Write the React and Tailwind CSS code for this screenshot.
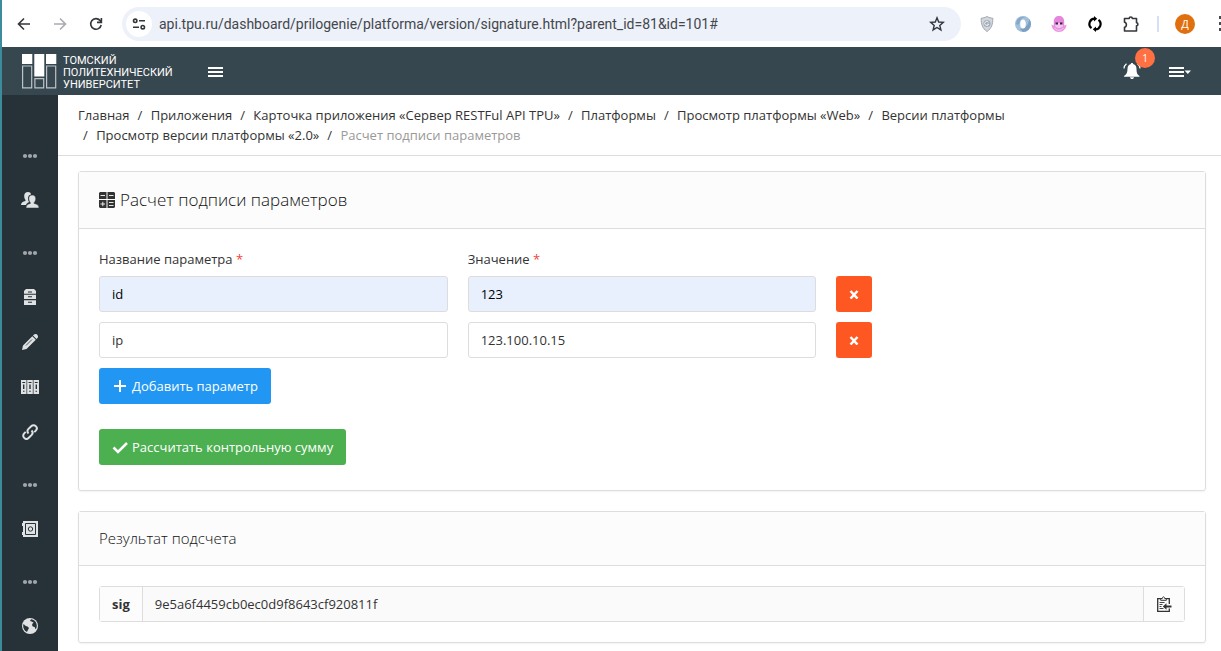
import React, { useState } from 'react';

const breadcrumbs = [
    'Главная',
    'Приложения',
    'Карточка приложения «Сервер RESTFul API TPU»',
    'Платформы',
    'Просмотр платформы «Web»',
    'Версии платформы',
    'Просмотр версии платформы «2.0»',
];

/* ---------- Browser icons ---------- */

const BackIcon = () => (
    <svg width="16" height="16" viewBox="0 0 16 16" fill="none" stroke="currentColor" strokeWidth="1.6">
        <path d="M14 8H3M8 2.5 2.5 8 8 13.5" />
    </svg>
);

const ForwardIcon = () => (
    <svg width="16" height="16" viewBox="0 0 16 16" fill="none" stroke="currentColor" strokeWidth="1.6">
        <path d="M2 8h11M8 2.5 13.5 8 8 13.5" />
    </svg>
);

const ReloadIcon = () => (
    <svg width="16" height="16" viewBox="0 0 16 16" fill="none" stroke="currentColor" strokeWidth="1.6">
        <path d="M13.2 9A5.3 5.3 0 1 1 12 4.4L13.4 6" />
        <path d="M13.4 2v4.4H9" />
    </svg>
);

const SiteInfoIcon = () => (
    <svg width="14" height="14" viewBox="0 0 14 14" fill="none" stroke="#33363a" strokeWidth="1.6">
        <circle cx="3.2" cy="3.8" r="1.7" />
        <path d="M7 3.8h6M1 10.2h6" />
        <circle cx="10.8" cy="10.2" r="1.7" />
    </svg>
);

const StarIcon = () => (
    <svg width="16" height="16" viewBox="0 0 16 16" fill="none" stroke="#33363a" strokeWidth="1.4">
        <path d="m8 1.8 1.7 4.2 4.6.4-3.5 3 1.1 4.5L8 11.5l-3.9 2.4 1.1-4.5-3.5-3L6.3 6Z" />
    </svg>
);

const ShieldIcon = () => (
    <svg width="16" height="18" viewBox="0 0 16 18" fill="none">
        <path d="M8 1.5c2 1.2 4 1.6 5.8 1.7C14 9 12.5 13.5 8 16.5 3.5 13.5 2 9 2.2 3.2 4 3.1 6 2.7 8 1.5Z" fill="#d3d7dc" stroke="#a0a7af" />
        <circle cx="8" cy="8.5" r="3.6" fill="#a3adba" />
        <path d="M9.6 7.2A2.1 2.1 0 1 0 9.8 9.2H8" stroke="#eef1f4" />
    </svg>
);

const RingIcon = () => (
    <svg width="18" height="18" viewBox="0 0 18 18" fill="none">
        <circle cx="9" cy="9" r="8" fill="#a3bfda" />
        <path d="M9 17a8 8 0 0 0 8-8c0-2-1-4-2-5 0 4-2 9-9 10Z" fill="#7ba0c4" />
        <path d="M3 5c2-3 6-4 9-3-4 0-6 3-6.5 6-.5 2-2 2-3.5 1Z" fill="#83a8cb" />
        <ellipse cx="9" cy="9" rx="2.8" ry="4.5" fill="#fff" />
    </svg>
);

const PinkIcon = () => (
    <svg width="16" height="18" viewBox="0 0 16 18" fill="none">
        <path d="M2.8 6.5C2.8 3 5 1 8 1s5.2 2 5.2 5.5V11H2.8Z" fill="#e585dc" />
        <path d="M.5 9.500c1 .8 2 1 3 1h9c1 0 2-.2 3-1 0 4-3.500 7.500-7.500 7.500S.5 13.500.5 9.500Z" fill="#e795e2" />
        <path d="M4 8h8v2c0 2-2 3-4 3s-4-1-4-3Z" fill="#f3c5ec" />
        <path d="M4.5 7.5h2.500v2H4.500ZM9 7.500h2.500v2H9Z" fill="#3a1f4d" />
        <path d="M3.5 13c2 3 7 3 9 0" stroke="#f7c9f3" />
    </svg>
);

const SyncIcon = () => (
    <svg width="16" height="16" viewBox="0 0 16 16" fill="none" stroke="#000" strokeWidth="2.2">
        <path d="M4.5 12.2A5.3 5.3 0 0 1 8 2.7M11.5 3.8A5.3 5.3 0 0 1 8 13.3" />
        <path d="M7 0v5.4L10.2 2.7ZM9 10.6V16l-3.2-2.7Z" fill="#000" stroke="none" />
    </svg>
);

const PuzzleIcon = () => (
    <svg width="18" height="18" viewBox="0 0 18 18" fill="none" stroke="#33363a" strokeWidth="1.6" strokeLinejoin="round">
        <path d="M2.5 3.5h4.7c0-2 3.1-2 3.1 0h4.2v4.3c1.9 0 1.9 3 0 3V16h-12v-3.8c2.5-.3 2.5-4.6 0-4.9Z" />
    </svg>
);

/* ---------- Navbar icons ---------- */

const TpuLogo = () => (
    <svg width="35" height="35" viewBox="0 0 35 35" fill="none">
        <path d="M0 0h10.3v10H0ZM12.3 0h10v22.5h-10ZM24 0h10.3v10H24Z" fill="#fff" />
        <path d="M.6 12h9.1v21.8H.6ZM12.9 24.6h8.8v9.2h-8.8ZM24.6 12h9.1v21.8h-9.1Z" stroke="#bcc4c8" strokeWidth="1.2" />
    </svg>
);

const BurgerIcon = ({ caret }) => (
    <svg width={caret ? 22 : 15} height="12" viewBox={caret ? '0 0 22 12' : '0 0 15 12'} fill="#fff">
        <path d="M0 2h15v2H0ZM0 6h15v2H0ZM0 10h15v2H0Z" />
        {caret && <path d="M15.5 5.5H22L18.8 9Z" />}
    </svg>
);

const BellIcon = () => (
    <svg width="18" height="16" viewBox="0 0 18 16" fill="none">
        <path d="M9 0c.8 0 1.2.5 1.2 1.1C12.5 1.7 13.5 3.5 13.5 6c0 3.5.5 5.5 3 7v.8H1V13c2.5-1.5 3.5-3.5 3.5-7 0-2.5 1-4.3 3.3-4.9C7.8.5 8.2 0 9 0ZM7 14.2h4c0 2.4-4 2.4-4 0Z" fill="#fff" />
        <path d="M3.5.8C2 2 1 3.8 1 5.5M14.5.8C16 2 17 3.8 17 5.5" stroke="#fff" strokeWidth="1.2" />
    </svg>
);

/* ---------- Sidebar icons ---------- */

const DotsIcon = () => (
    <svg width="16" height="6" viewBox="0 0 16 6" fill="#a0a6a9">
        <circle cx="3" cy="3" r="2.1" />
        <circle cx="8" cy="3" r="2.1" />
        <circle cx="13" cy="3" r="2.1" />
    </svg>
);

const UsersIcon = () => (
    <svg width="18" height="16" viewBox="0 0 18 16" fill="currentColor">
        <path d="M7 0c2 0 3 1.2 3 2.6C8 3 7 4.5 7 6.5c0 1.5.5 2.8 1.2 3.6C6 11 5.3 12 5 13H0c0-2.5 2-3.5 4.5-4V8C3.5 7 3.2 5.5 3.2 3.8 3.2 1.5 4.7 0 7 0Z" />
        <path d="M11.2 3c2.3 0 3.5 1.4 3.5 3.6 0 1.6-.6 3-1.5 3.9v1c2.5.4 4.8 1.5 4.8 4.5H5c0-3 2-4.1 4.3-4.5v-1c-.9-.9-1.5-2.3-1.5-3.9C7.8 4.4 9 3 11.2 3Z" stroke="#263238" strokeWidth=".5" />
    </svg>
);

const ArchiveIcon = () => (
    <svg width="14" height="16" viewBox="0 0 14 16" fill="currentColor">
        <path d="M3 0h8l2 2v2.8H1V2ZM1 5.8h12v4.3H1ZM1 11.2h12V16H1Z" />
        <path d="M5 2.5h4v1H5ZM5 7.2h4v1H5ZM5 12.8h4v1H5Z" fill="#263238" />
    </svg>
);

const PencilIcon = () => (
    <svg width="16" height="16" viewBox="0 0 16 16" fill="currentColor">
        <path d="M13.5 0A2.5 2.5 0 0 1 15.5 4l-1 1L11 1.5l1-1c.4-.3.9-.5 1.5-.5ZM1 11.5 0 16l4.5-1L13.8 5.7 10.3 2.2Z" />
        <path d="m4 11.5 6-6" stroke="#263238" strokeWidth=".8" />
    </svg>
);

const DrawersIcon = () => (
    <svg width="18" height="14" viewBox="0 0 18 14" fill="none">
        <path d="M0 0h5.5v14H0ZM6.2 0h5.6v14H6.2ZM12.5 0H18v14h-5.5Z" fill="currentColor" />
        <path d="M1.3 2.5h2.9M7.5 2.5h3M13.8 2.5h2.9" stroke="#263238" />
        <path d="M2.7 4.5v4.5M9 4.5v4.5M15.3 4.5v4.5" stroke="#263238" strokeWidth="1.4" />
        <path d="M2 10.8h1.5v1H2ZM8.2 10.8h1.6v1H8.2ZM14.5 10.8H16v1h-1.5Z" fill="#263238" />
    </svg>
);

const LinkIcon = () => (
    <svg width="16" height="16" viewBox="0 0 16 16" fill="none" stroke="currentColor" strokeWidth="2">
        <path d="M6.5 9.5c-1.5-1.5-1.3-3.3 0-4.6l2.7-2.7c1.4-1.4 3.3-1.4 4.6-.1s1.3 3.2 0 4.5l-1.5 1.5" />
        <path d="M9.5 6.5c1.5 1.5 1.3 3.3 0 4.6l-2.7 2.7c-1.4 1.4-3.3 1.4-4.6.1s-1.3-3.2 0-4.5l1.5-1.5" />
    </svg>
);

const SafeIcon = () => (
    <svg width="16" height="16" viewBox="0 0 16 16" fill="none">
        <path d="M1 0h15v16H1v-2H0v-3h1V5H0V2h1Z" fill="currentColor" />
        <path d="M3.5 2.5h10v11h-10Z" stroke="#263238" />
        <circle cx="8.5" cy="8" r="2.2" stroke="#263238" />
    </svg>
);

const GlobeIcon = () => (
    <svg width="16" height="16" viewBox="0 0 16 16" fill="none">
        <circle cx="8" cy="8" r="8" fill="currentColor" />
        <path d="M9 1.2c3.5.3 5.8 3.2 5.8 6.5 0 1.5-.4 2.5-1 3.5-.8-.3-.5-1.7-1.3-2.2-1-.3-2.2-.5-2.4-1.8-.1-1.2 1-2.2 1.5-2.7L9.5 3.5 8 3ZM1.5 6c1 .5 1.5 1.8 3 2.3 1.3.4 2.5 1 2.3 2.2-.2 1-1 1.2-1.2 2.2-.1.8-.6 1.3-1.1 1C2.5 12.5 1 10.5 1.2 7.5Z" fill="#263238" />
    </svg>
);

/* ---------- Page icons ---------- */

const CalculatorIcon = () => (
    <svg width="16" height="16" viewBox="0 0 16 16" fill="none">
        <path d="M1 0h6.5v7H0V1ZM8.500 0H15l1 1v6H8.500ZM0 8h7.500v8H1l-1-1ZM8.500 8H16v7l-1 1H8.500Z" fill="#333" />
        <path d="M1.5 3.5h4.5M10 3.5h4.5M1.5 12h4.5M3.8 9.8v4.4M10 10.5h4.5M10 13.5h4.5" stroke="#fcfcfc" strokeWidth=".9" />
    </svg>
);

const CrossIcon = () => (
    <svg width="10" height="10" viewBox="0 0 10 10" stroke="#fff" strokeWidth="2.5">
        <path d="m1.5 2 7 7.5M8.5 2l-7 7.5" />
    </svg>
);

const PlusIcon = () => (
    <svg width="16" height="16" viewBox="0 0 16 16" stroke="#fff" strokeWidth="2">
        <path d="M8 2v12M2 8h12" />
    </svg>
);

const CheckIcon = () => (
    <svg width="16" height="16" viewBox="0 0 16 16" fill="none" stroke="#fff" strokeWidth="2.5">
        <path d="m1.5 8.500 4.500 4.500 9-9" />
    </svg>
);

const ClipboardIcon = () => (
    <svg width="16" height="16" viewBox="0 0 16 16" fill="none" stroke="#333" strokeWidth="1.3">
        <path d="M5 2.7H1.7v12.6h11.6v-2.8M10 2.7h3.3V8" />
        <path d="M4.7 4.3V2.5h1.6C6.5.3 8.5.3 8.7 2.5h1.6v1.8Z" strokeWidth="1" fill="#fcfcfc" />
        <path d="M3.5 6.5h5M3.5 8.5h3M3.5 10.5h2M3.5 12.5h4" strokeWidth=".9" />
        <path d="M15.5 10.5H9" strokeWidth="2" />
        <path d="M10.5 7.3v6.4L6.8 10.5Z" fill="#333" stroke="none" />
    </svg>
);

const sidebarItems = [
    { divider: true },
    { label: 'Пользователи', icon: UsersIcon },
    { divider: true },
    { label: 'Архив', icon: ArchiveIcon },
    { label: 'Редактирование', icon: PencilIcon },
    { label: 'Картотека', icon: DrawersIcon },
    { label: 'Ссылки', icon: LinkIcon },
    { divider: true },
    { label: 'Сейф', icon: SafeIcon },
    { divider: true },
    { label: 'Сайт', icon: GlobeIcon },
];

const BrowserBar = () => (
    <div className="flex h-[47px] items-center overflow-hidden bg-white pl-1 text-[#33363a]">
        <button aria-label="Назад" className="flex w-9 shrink-0 justify-center"><BackIcon /></button>
        <button aria-label="Вперед" className="flex w-9 shrink-0 justify-center text-[#a9abae]"><ForwardIcon /></button>
        <button aria-label="Обновить" className="flex w-9 shrink-0 justify-center"><ReloadIcon /></button>
        <div className="mx-2 flex h-[34px] min-w-0 flex-1 items-center rounded-full bg-[#edf1fa] pl-1 pr-4">
            <button aria-label="Сведения о сайте" className="flex size-[26px] shrink-0 items-center justify-center rounded-full bg-white">
                <SiteInfoIcon />
            </button>
            <input
                aria-label="Адрес"
                className="ml-[7px] min-w-0 flex-1 bg-transparent font-[Roboto,sans-serif] text-sm text-[#44474b] outline-none"
                defaultValue="api.tpu.ru/dashboard/prilogenie/platforma/version/signature.html?parent_id=81&id=101#"
            />
            <button aria-label="В закладки"><StarIcon /></button>
        </div>
        <button aria-label="Защита" className="flex w-9 shrink-0 justify-center"><ShieldIcon /></button>
        <button aria-label="Прокси" className="flex w-9 shrink-0 justify-center"><RingIcon /></button>
        <button aria-label="Персонаж" className="flex w-9 shrink-0 justify-center"><PinkIcon /></button>
        <button aria-label="Синхронизация" className="flex w-9 shrink-0 justify-center"><SyncIcon /></button>
        <button aria-label="Расширения" className="flex w-9 shrink-0 justify-center"><PuzzleIcon /></button>
        <div className="flex w-[18px] shrink-0 justify-center"><span className="h-4 w-0.5 bg-[#d3e0f5]" /></div>
        <button aria-label="Профиль" className="flex w-9 shrink-0 justify-center">
            <span className="flex size-5 items-center justify-center rounded-full bg-[#e0700f] text-[11px] text-white">Д</span>
        </button>
        <button aria-label="Меню браузера" className="flex w-[18px] shrink-0 flex-col items-end gap-[3px]">
            <span className="h-[3px] w-0.5 bg-[#47494c]" />
            <span className="h-[3px] w-0.5 bg-[#47494c]" />
            <span className="h-[3px] w-0.5 bg-[#47494c]" />
        </button>
    </div>
);

const Navbar = () => (
    <header className="flex h-12 items-center bg-[#37474f] pl-5 pr-[30px] text-white">
        <a href="#" className="flex items-center gap-[6px]">
            <TpuLogo />
            <span className="flex w-[107px] flex-col whitespace-nowrap pt-1 font-[Roboto,sans-serif] text-[11px] leading-3">
                <span>ТОМСКИЙ</span>
                <span>ПОЛИТЕХНИЧЕСКИЙ</span>
                <span>УНИВЕРСИТЕТ</span>
            </span>
        </a>
        <button aria-label="Свернуть меню" className="ml-[38px]"><BurgerIcon /></button>
        <button aria-label="Уведомления" className="relative ml-auto">
            <BellIcon />
            <span className="absolute -top-[15px] left-3 flex size-5 items-center justify-center rounded-full bg-[#ff7043] text-[10px]">1</span>
        </button>
        <button aria-label="Меню" className="ml-7"><BurgerIcon caret /></button>
    </header>
);

const Sidebar = () => (
    <nav className="w-14 shrink-0 bg-[#263238] pt-[31px] text-[#dfe1e2]">
        {sidebarItems.map((item, index) => (
            item.divider ? (
                <div key={index} className="flex h-[52px] items-center justify-center pt-2"><DotsIcon /></div>
            ) : (
                <a key={index} href="#" aria-label={item.label} className="flex h-[45px] items-center justify-center pb-0.5">
                    <item.icon />
                </a>
            )
        ))}
    </nav>
);

const Breadcrumbs = () => (
    <div className="border-b border-[#ddd] py-[10px] pl-5 pr-[15px]">
        <ol className="flex flex-wrap gap-x-[3px]">
            {breadcrumbs.map((item, index) => (
                <li key={item}>
                    {index > 0 && <span className="px-[5px]">/ </span>}
                    <a href="#">{item}</a>
                </li>
            ))}
            <li className="text-[#999]">
                <span className="px-[5px] text-[#333]">/ </span>
                Расчет подписи параметров
            </li>
        </ol>
    </div>
);

const inputClass = 'h-9 w-full rounded-[3px] border border-[#ddd] px-3 outline-none';

const App = () => {
    const [params, setParams] = useState([
        { id: 1, name: 'id', value: '123', autofilled: true },
        { id: 2, name: 'ip', value: '123.100.10.15', autofilled: false },
    ]);

    const addParam = () => {
        setParams([...params, { id: Date.now(), name: '', value: '', autofilled: false }]);
    };

    const removeParam = (id) => {
        setParams(params.filter((param) => param.id !== id));
    };

    const updateParam = (id, field, text) => {
        setParams(params.map((param) => (param.id === id ? { ...param, [field]: text, autofilled: false } : param)));
    };

    return (
        <div className="flex min-h-screen flex-col border-l-2 border-[#3c8c9c] bg-white font-['Open_Sans',sans-serif] text-[13px] leading-5 text-[#333]">
            <BrowserBar />
            <Navbar />
            <div className="flex flex-1">
                <Sidebar />
                <main className="min-w-0 flex-1">
                    <Breadcrumbs />
                    <div className="flex flex-col gap-5 pb-2 pl-5 pr-[15px] pt-[15px]">

                        {/* Parameters form */}
                        <section className="rounded-[3px] border border-[#ddd] shadow-xs">
                            <div className="flex items-center gap-[5px] border-b border-[#ddd] bg-[#fcfcfc] px-5 py-4">
                                <CalculatorIcon />
                                <h1 className="text-[17px] font-light leading-6 text-[#111]">Расчет подписи параметров</h1>
                            </div>
                            <form className="p-5 pb-[25px]" onSubmit={(e) => e.preventDefault()}>
                                <div className="mb-[7px] grid grid-cols-3 gap-x-5">
                                    <label htmlFor="name-1">Название параметра <span className="text-[#f44336]">*</span></label>
                                    <label htmlFor="value-1">Значение <span className="text-[#f44336]">*</span></label>
                                </div>
                                <div className="flex flex-col gap-[10px]">
                                    {params.map((param) => (
                                        <div key={param.id} className="grid grid-cols-3 gap-x-5">
                                            <input
                                                id={`name-${param.id}`}
                                                aria-label="Название параметра"
                                                className={`${inputClass} ${param.autofilled ? 'bg-[#e8f0fe] text-black' : 'bg-white'}`}
                                                value={param.name}
                                                onChange={(e) => updateParam(param.id, 'name', e.target.value)}
                                            />
                                            <input
                                                id={`value-${param.id}`}
                                                aria-label="Значение"
                                                className={`${inputClass} ${param.autofilled ? 'bg-[#e8f0fe] text-black' : 'bg-white'}`}
                                                value={param.value}
                                                onChange={(e) => updateParam(param.id, 'value', e.target.value)}
                                            />
                                            <button
                                                type="button"
                                                aria-label="Удалить параметр"
                                                className="flex size-9 items-center justify-center rounded-[3px] bg-[#ff5722]"
                                                onClick={() => removeParam(param.id)}
                                            >
                                                <CrossIcon />
                                            </button>
                                        </div>
                                    ))}
                                </div>
                                <button
                                    type="button"
                                    className="mt-[10px] flex h-9 items-center gap-1 rounded-[3px] bg-[#2196f3] px-[13px] text-white"
                                    onClick={addParam}
                                >
                                    <PlusIcon />
                                    Добавить параметр
                                </button>
                                <button type="submit" className="mt-[25px] flex h-9 items-center gap-1 rounded-[3px] bg-[#4caf50] px-[13px] text-white">
                                    <CheckIcon />
                                    Рассчитать контрольную сумму
                                </button>
                            </form>
                        </section>

                        {/* Result */}
                        <section className="rounded-[3px] border border-[#ddd] shadow-xs">
                            <div className="border-b border-[#ddd] bg-[#fcfcfc] px-5 py-4">
                                <h2 className="text-[15px] font-light leading-[21px] text-[#111]">Результат подсчета</h2>
                            </div>
                            <div className="p-5">
                                <div className="flex h-9 rounded-[3px] border border-[#ddd]">
                                    <label htmlFor="sig" className="flex items-center border-r border-[#ddd] bg-[#fcfcfc] px-3 font-bold">sig</label>
                                    <input
                                        id="sig"
                                        readOnly
                                        className="min-w-0 flex-1 bg-[#fafafa] px-3 outline-none"
                                        value="9e5a6f4459cb0ec0d9f8643cf920811f"
                                    />
                                    <button aria-label="Скопировать" className="flex w-[41px] items-center justify-center border-l border-[#ddd] bg-[#fcfcfc]">
                                        <ClipboardIcon />
                                    </button>
                                </div>
                            </div>
                        </section>

                    </div>
                </main>
            </div>
        </div>
    );
};

export default App;
